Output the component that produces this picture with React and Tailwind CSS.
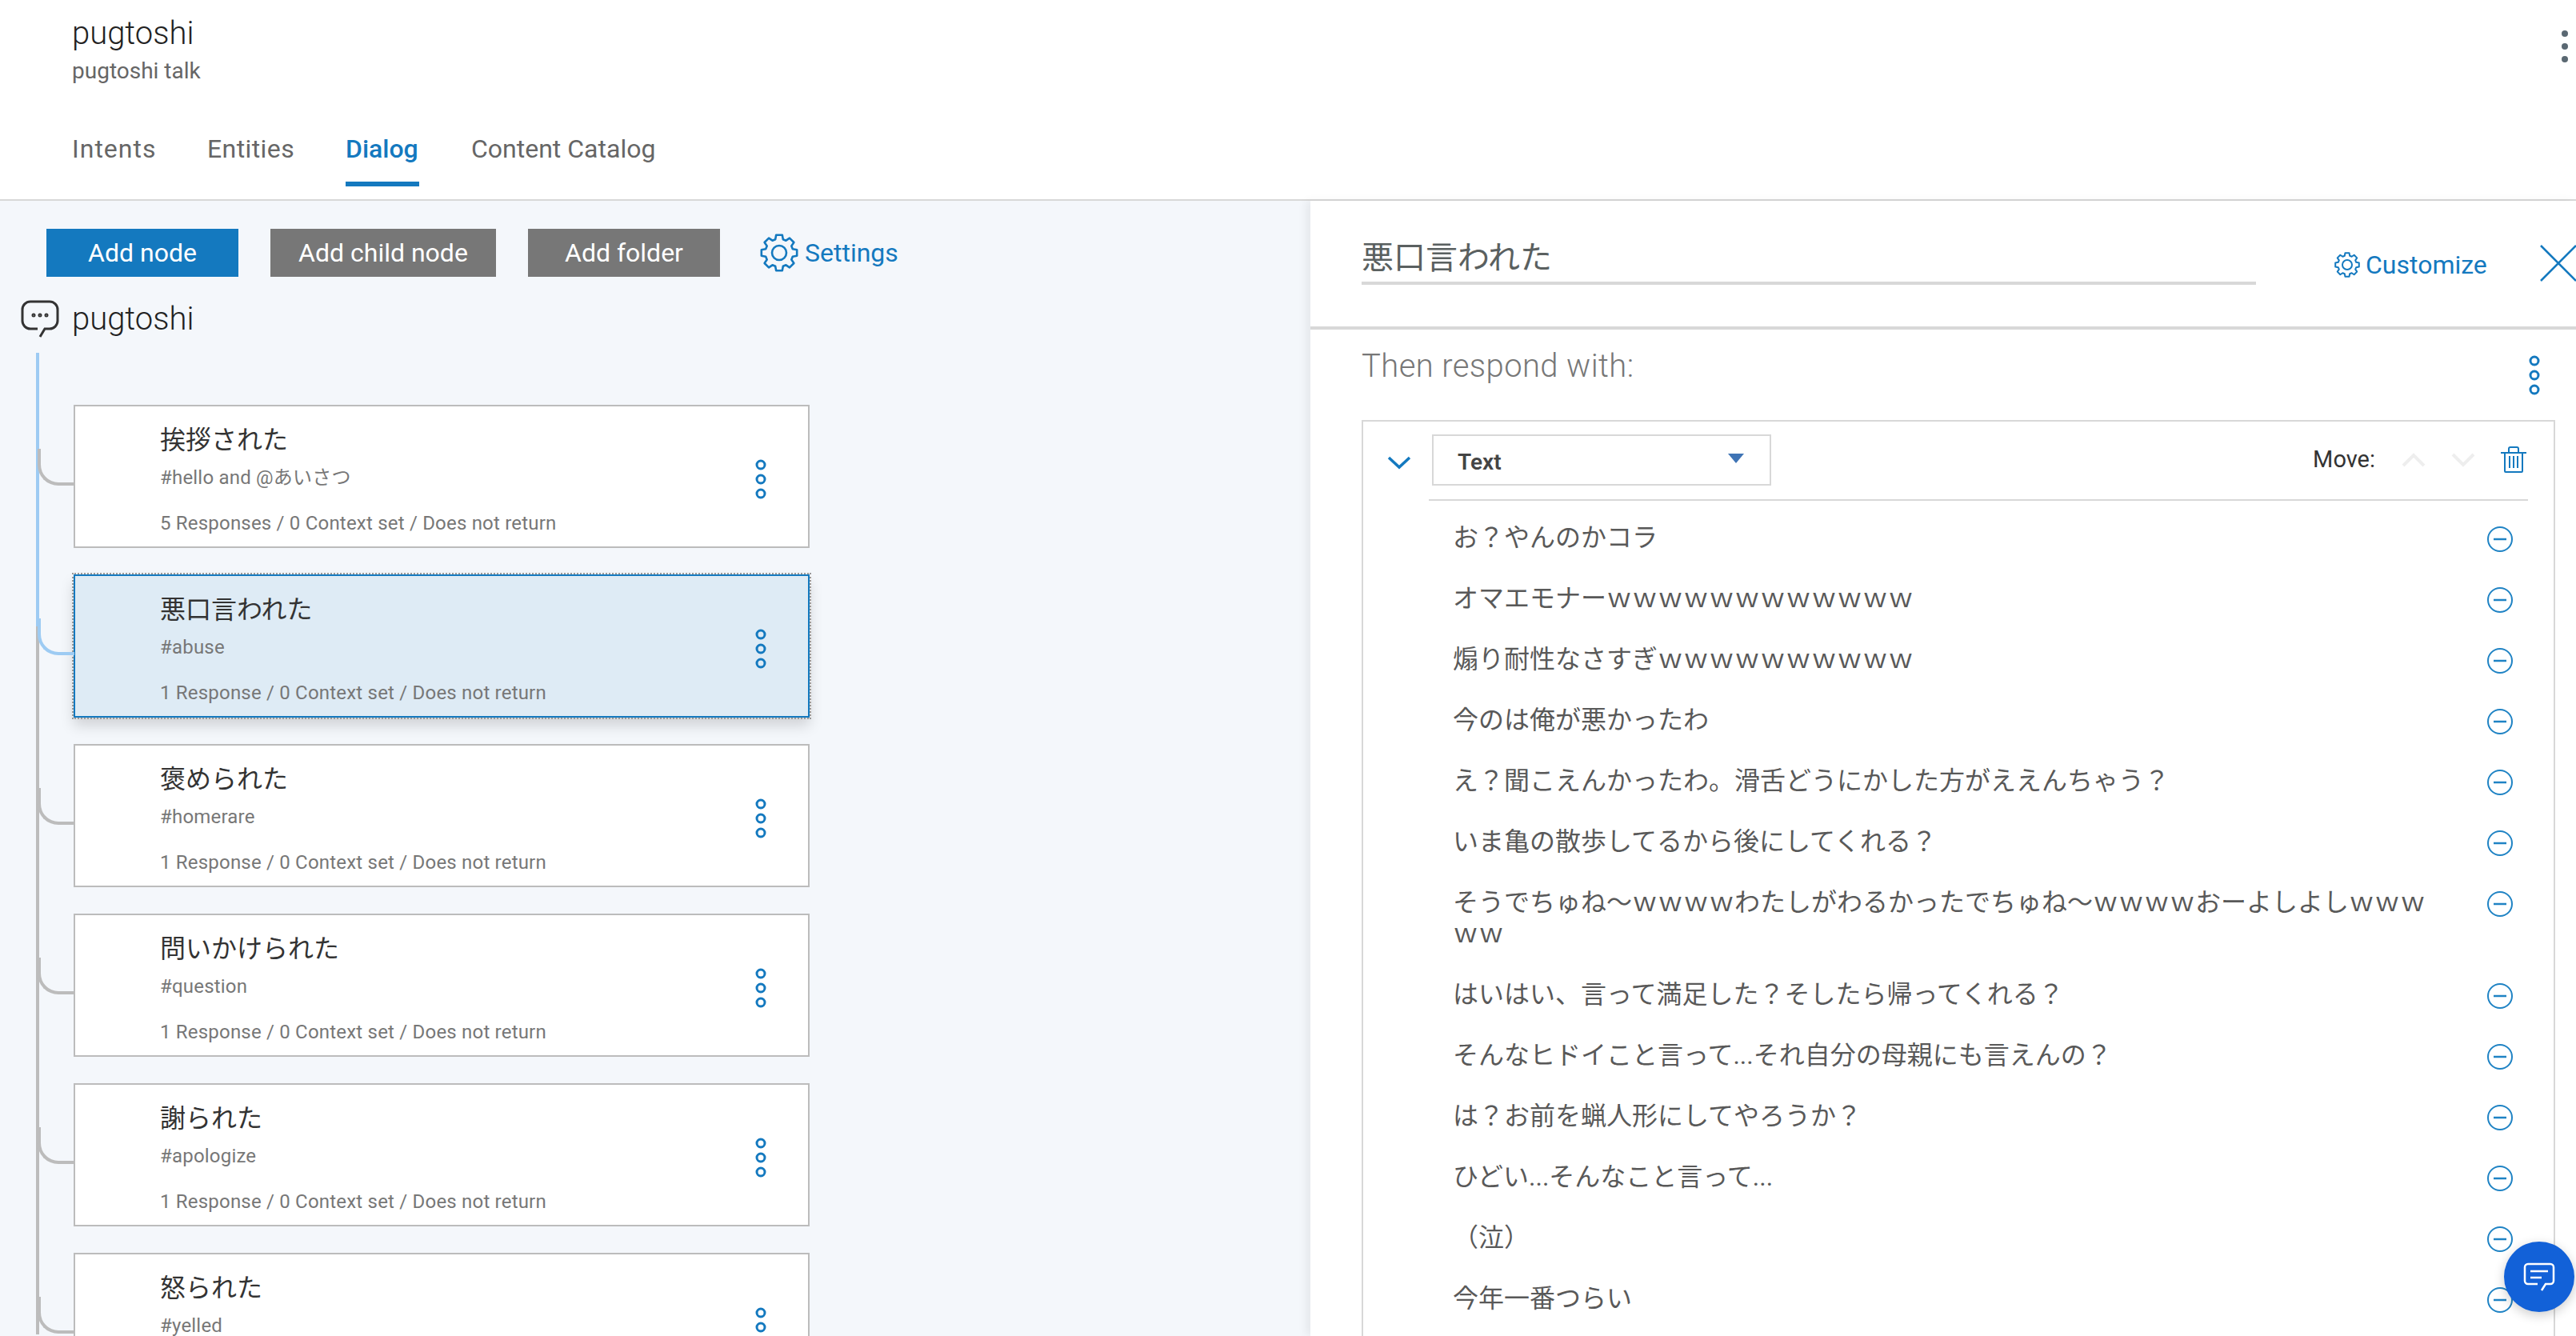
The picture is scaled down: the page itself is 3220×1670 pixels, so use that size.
const nodes = [
  { title: '挨拶された', cond: '#hello and @あいさつ', meta: '5 Responses / 0 Context set / Does not return' },
  { title: '悪口言われた', cond: '#abuse', meta: '1 Response / 0 Context set / Does not return', selected: true },
  { title: '褒められた', cond: '#homerare', meta: '1 Response / 0 Context set / Does not return' },
  { title: '問いかけられた', cond: '#question', meta: '1 Response / 0 Context set / Does not return' },
  { title: '謝られた', cond: '#apologize', meta: '1 Response / 0 Context set / Does not return' },
  { title: '怒られた', cond: '#yelled', meta: '1 Response / 0 Context set / Does not return' },
]

const responses = [
  'お？やんのかコラ',
  'オマエモナーｗｗｗｗｗｗｗｗｗｗｗｗ',
  '煽り耐性なさすぎｗｗｗｗｗｗｗｗｗｗ',
  '今のは俺が悪かったわ',
  'え？聞こえんかったわ。滑舌どうにかした方がええんちゃう？',
  'いま亀の散歩してるから後にしてくれる？',
  'そうでちゅね〜ｗｗｗｗわたしがわるかったでちゅね〜ｗｗｗｗおーよしよしｗｗｗｗｗ',
  'はいはい、言って満足した？そしたら帰ってくれる？',
  'そんなヒドイこと言って...それ自分の母親にも言えんの？',
  'は？お前を蝋人形にしてやろうか？',
  'ひどい...そんなこと言って...',
  '（泣）',
  '今年一番つらい',
]

// eight chunky teeth, same outline for both gear icons
function gearPath() {
  const pts = []
  for (let i = 0; i < 8; i++) {
    const a = (i * Math.PI) / 4
    const at = (r, d) => `${(24 + r * Math.cos(a + d)).toFixed(2)} ${(24 + r * Math.sin(a + d)).toFixed(2)}`
    pts.push(at(17.5, -0.28), at(22.5, -0.17), at(22.5, 0.17), at(17.5, 0.28))
  }
  return `M${pts.join('L')}Z`
}

function Gear({ size, strokeWidth }) {
  return (
    <svg width={size} height={size} viewBox="0 0 48 48" fill="none" stroke="currentColor" strokeWidth={strokeWidth} strokeLinejoin="round" className="shrink-0">
      <path d={gearPath()} />
      <circle cx="24" cy="24" r="9" />
    </svg>
  )
}

function Dots({ className = 'text-[#1479bf]' }) {
  return (
    <svg width="16" height="50" viewBox="0 0 16 50" fill="none" stroke="currentColor" strokeWidth="3" className={className}>
      <circle cx="8" cy="7" r="5" />
      <circle cx="8" cy="25" r="5" />
      <circle cx="8" cy="43" r="5" />
    </svg>
  )
}

function MinusCircle() {
  return (
    <svg width="34" height="34" viewBox="0 0 34 34" fill="none" stroke="#1f83c4" className="mt-[4px] shrink-0">
      <circle cx="17" cy="17" r="15" strokeWidth="2" />
      <path d="M9 17h16" strokeWidth="2.5" />
    </svg>
  )
}

function NodeCard({ node }) {
  return (
    <div
      className={`relative flex h-[179px] w-[920px] items-center justify-between pl-[106px] pr-[51px] border-2 ${
        node.selected
          ? 'border-[#1479bf] bg-[#deebf5] outline-2 outline-dotted outline-[#999999] shadow-[0_10px_16px_rgba(0,0,0,0.15)]'
          : 'border-[#bcbcbc] bg-white'
      }`}
    >
      <div
        className={`absolute left-[-47px] top-[53px] h-[46px] w-[46px] rounded-bl-[26px] border-b-4 border-l-4 ${
          node.selected ? 'border-[#9dcbf3]' : 'border-[#bcbcbc]'
        }`}
      />
      <div className="flex h-full flex-col">
        <p className="mt-[21px] text-[32px] leading-[42px] text-[#333333]">{node.title}</p>
        <p className="mt-[10px] text-[24px] leading-[32px] tracking-[0.2px] text-[#777777]">{node.cond}</p>
        <p className="mt-[25px] text-[24px] leading-[32px] tracking-[0.2px] text-[#777777]">{node.meta}</p>
      </div>
      <Dots className="mt-[6px] text-[#1479bf]" />
    </div>
  )
}

export default function App() {
  return (
    <div
      className="relative flex h-[1670px] w-[3220px] flex-col overflow-hidden bg-white"
      style={{ fontFamily: 'Roboto, "Noto Sans CJK JP", sans-serif' }}
    >
      <header className="relative h-[251px] shrink-0 border-b-2 border-[#d8d8d8] pl-[90px]">
        <p className="pt-[20px] text-[40px] font-light leading-[44px] text-[#222222]">pugtoshi</p>
        <p className="mt-[8px] text-[28px] leading-[34px] text-[#666666]">pugtoshi talk</p>
        <nav className="mt-[59px] flex text-[32px] leading-[42px] text-[#666666]">
          <span className="w-[105px] tracking-[1px]">Intents</span>
          <span className="ml-[64px] w-[108px] tracking-[0.4px]">Entities</span>
          <span className="relative ml-[65px] w-[92px] font-medium text-[#1479bf]">
            Dialog
            <span className="absolute bottom-[-26px] left-0 h-[6px] w-full bg-[#1479bf]" />
          </span>
          <span className="ml-[65px]">Content Catalog</span>
        </nav>
        <div className="absolute right-[10px] top-[38px] flex flex-col gap-[8px]">
          <span className="h-[8px] w-[8px] rounded-full bg-[#5a6872]" />
          <span className="h-[8px] w-[8px] rounded-full bg-[#5a6872]" />
          <span className="h-[8px] w-[8px] rounded-full bg-[#5a6872]" />
        </div>
      </header>

      <main className="flex min-h-0 flex-1">
        <section className="w-[1638px] shrink-0 bg-[#f4f7fb]">
          <div className="flex items-center pl-[58px] pt-[35px]">
            <button className="h-[60px] w-[240px] bg-[#1479bf] text-[32px] text-white">Add node</button>
            <button className="ml-[40px] h-[60px] w-[282px] bg-[#777777] text-[32px] text-white">Add child node</button>
            <button className="ml-[40px] h-[60px] w-[240px] bg-[#777777] text-[32px] text-white">Add folder</button>
            <span className="ml-[50px] flex items-center gap-[8px] text-[32px] text-[#1479bf]">
              <Gear size={48} strokeWidth={2.6} />
              Settings
            </span>
          </div>
          <div className="mt-[29px] flex items-center gap-[16px] pl-[26px]">
            <svg width="48" height="48" viewBox="0 0 48 48" fill="none" stroke="#333333" strokeWidth="3">
              <path d="M21 36H12A10 10 0 0 1 2 26V12A10 10 0 0 1 12 2h24a10 10 0 0 1 10 10v14a10 10 0 0 1-10 10h-6l-6 10" />
              <circle cx="16" cy="19" r="1" />
              <circle cx="24" cy="19" r="1" />
              <circle cx="32" cy="19" r="1" />
            </svg>
            <p className="text-[40px] font-light leading-[48px] text-[#222222]">pugtoshi</p>
          </div>
          <div className="relative mt-[18px] h-[1227px] pl-[92px] pt-[65px]">
            <div className="absolute left-[45px] top-0 h-full w-[4px] bg-[#bcbcbc]" />
            <div className="absolute left-[45px] top-0 h-[342px] w-[4px] bg-[#9dcbf3]" />
            <div className="flex flex-col gap-[33px]">
              {nodes.map((node) => (
                <NodeCard key={node.title} node={node} />
              ))}
            </div>
          </div>
        </section>

        <section className="relative min-w-0 flex-1 overflow-hidden bg-white shadow-[-6px_0_10px_rgba(0,0,0,0.06)]">
          <div className="flex h-[161px] border-b-4 border-[#d8d8d8] pl-[64px]">
            <div className="w-[1118px] shrink-0">
              <p className="h-[105px] border-b-4 border-[#d8d8d8] pt-[46px] text-[40px] leading-[52px] text-[#5a6060]">悪口言われた</p>
            </div>
            <span className="ml-[98px] mt-[56px] flex h-[48px] shrink-0 items-center gap-[7px] text-[32px] text-[#1479bf]">
              <Gear size={32} strokeWidth={3} />
              Customize
            </span>
            <svg width="48" height="48" viewBox="0 0 48 48" fill="none" stroke="#1479bf" strokeWidth="2.5" className="ml-[65px] mt-[54px] shrink-0">
              <path d="M2 2l44 44M46 2L2 46" />
            </svg>
          </div>

          <div className="flex items-start justify-between pl-[64px] pr-[44px] pt-[22px]">
            <p className="text-[40px] font-light leading-[48px] tracking-[0.4px] text-[#777777]">Then respond with:</p>
            <Dots className="mt-[10px] text-[#1479bf]" />
          </div>

          <div className="ml-[64px] mt-[31px] h-[1200px] w-[1492px] border-2 border-b-0 border-[#d8d8d8]">
            <div className="ml-[82px] mr-[32px] flex h-[99px] items-start justify-between border-b-2 border-[#d8d8d8] pl-[4px] pt-[16px]">
              <div className="relative flex h-[64px] w-[424px] items-center justify-between border-2 border-[#d8d8d8] pl-[30px] pr-[32px]">
                <svg width="30" height="18" viewBox="0 0 30 18" fill="none" stroke="#1479bf" strokeWidth="3.5" className="absolute left-[-58px] top-[24px]">
                  <path d="M2 3l13 12L28 3" />
                </svg>
                <span className="pt-[6px] text-[28px] font-semibold text-[#444444]">Text</span>
                <span className="mb-[4px] h-0 w-0 border-x-[10px] border-t-[12px] border-x-transparent border-t-[#3f74b5]" />
              </div>
              <div className="mr-[2px] mt-[10px] flex items-center">
                <span className="text-[29px] text-[#333333]">Move:</span>
                <svg width="30" height="18" viewBox="0 0 30 18" fill="none" stroke="#eeeeee" strokeWidth="4" className="ml-[33px]">
                  <path d="M2 16L15 3l13 13" />
                </svg>
                <svg width="30" height="18" viewBox="0 0 30 18" fill="none" stroke="#eeeeee" strokeWidth="4" className="ml-[32px]">
                  <path d="M2 2l13 13L28 2" />
                </svg>
                <svg width="32" height="33" viewBox="0 0 32 33" fill="none" stroke="#1479bf" strokeWidth="2" strokeLinejoin="round" className="ml-[32px]">
                  <path d="M0 8h32M10 8V3a2 2 0 0 1 2-2h8a2 2 0 0 1 2 2v5M5 8v23a1 1 0 0 0 1 1h20a1 1 0 0 0 1-1V8M11 12v15M16 12v15M21 12v15" />
                </svg>
              </div>
            </div>
            <div className="ml-[112px] mr-[50px] pt-[27px]">
              {responses.map((text) => (
                <div key={text} className="flex items-start justify-between pb-[37px]">
                  <p className="w-[1232px] text-[32px] leading-[39px] text-[#595959]">{text}</p>
                  <MinusCircle />
                </div>
              ))}
            </div>
          </div>
        </section>
      </main>

      <button className="absolute bottom-[30px] left-[3130px] flex h-[88px] w-[88px] items-center justify-center rounded-full bg-[#1261d8] shadow-[0_4px_14px_rgba(0,0,0,0.2)]">
        <svg width="40" height="36" viewBox="0 0 40 36" fill="none" stroke="white" strokeWidth="2.5">
          <path d="M18 27H6a4 4 0 0 1-4-4V6a4 4 0 0 1 4-4h28a4 4 0 0 1 4 4v17a4 4 0 0 1-4 4h-6l-5 8" />
          <path d="M9 11h22M9 19h14" />
        </svg>
      </button>
    </div>
  )
}
